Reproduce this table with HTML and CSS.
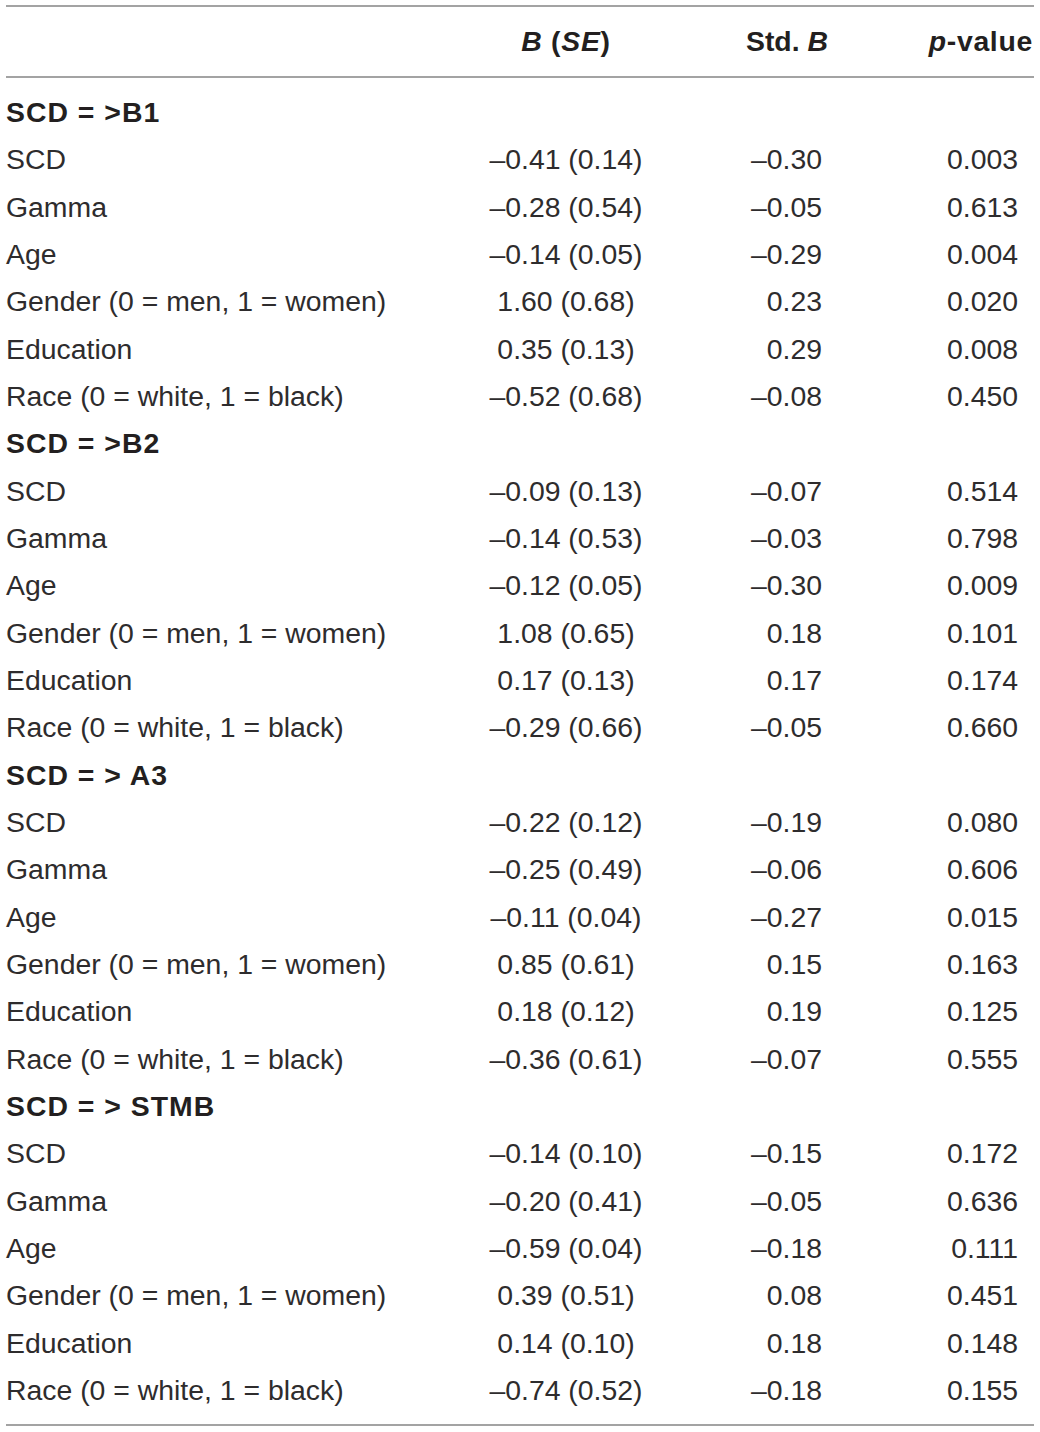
FILE: index.html
```html
<!DOCTYPE html>
<html lang="en">
<head>
    <meta charset="UTF-8">
    <title>Regression results</title>
    <link rel="stylesheet" href="styles.css">
</head>
<body>
    <div class="results-table">
        <div class="row head-row">
            <div class="cell label"></div>
            <div class="cell coef"><em>B</em> (<em>SE</em>)</div>
            <div class="cell std">Std. <em>B</em></div>
            <div class="cell pval"><em>p</em>-value</div>
        </div>

        <div class="table-body">
            <div class="row group-row"><div class="cell label">SCD = &gt;B1</div></div>
            <div class="row"><div class="cell label">SCD</div><div class="cell coef">–0.41 (0.14)</div><div class="cell std">–0.30</div><div class="cell pval">0.003</div></div>
            <div class="row"><div class="cell label">Gamma</div><div class="cell coef">–0.28 (0.54)</div><div class="cell std">–0.05</div><div class="cell pval">0.613</div></div>
            <div class="row"><div class="cell label">Age</div><div class="cell coef">–0.14 (0.05)</div><div class="cell std">–0.29</div><div class="cell pval">0.004</div></div>
            <div class="row"><div class="cell label">Gender (0 = men, 1 = women)</div><div class="cell coef">1.60 (0.68)</div><div class="cell std">0.23</div><div class="cell pval">0.020</div></div>
            <div class="row"><div class="cell label">Education</div><div class="cell coef">0.35 (0.13)</div><div class="cell std">0.29</div><div class="cell pval">0.008</div></div>
            <div class="row"><div class="cell label">Race (0 = white, 1 = black)</div><div class="cell coef">–0.52 (0.68)</div><div class="cell std">–0.08</div><div class="cell pval">0.450</div></div>

            <div class="row group-row"><div class="cell label">SCD = &gt;B2</div></div>
            <div class="row"><div class="cell label">SCD</div><div class="cell coef">–0.09 (0.13)</div><div class="cell std">–0.07</div><div class="cell pval">0.514</div></div>
            <div class="row"><div class="cell label">Gamma</div><div class="cell coef">–0.14 (0.53)</div><div class="cell std">–0.03</div><div class="cell pval">0.798</div></div>
            <div class="row"><div class="cell label">Age</div><div class="cell coef">–0.12 (0.05)</div><div class="cell std">–0.30</div><div class="cell pval">0.009</div></div>
            <div class="row"><div class="cell label">Gender (0 = men, 1 = women)</div><div class="cell coef">1.08 (0.65)</div><div class="cell std">0.18</div><div class="cell pval">0.101</div></div>
            <div class="row"><div class="cell label">Education</div><div class="cell coef">0.17 (0.13)</div><div class="cell std">0.17</div><div class="cell pval">0.174</div></div>
            <div class="row"><div class="cell label">Race (0 = white, 1 = black)</div><div class="cell coef">–0.29 (0.66)</div><div class="cell std">–0.05</div><div class="cell pval">0.660</div></div>

            <div class="row group-row"><div class="cell label">SCD = &gt; A3</div></div>
            <div class="row"><div class="cell label">SCD</div><div class="cell coef">–0.22 (0.12)</div><div class="cell std">–0.19</div><div class="cell pval">0.080</div></div>
            <div class="row"><div class="cell label">Gamma</div><div class="cell coef">–0.25 (0.49)</div><div class="cell std">–0.06</div><div class="cell pval">0.606</div></div>
            <div class="row"><div class="cell label">Age</div><div class="cell coef">–0.11 (0.04)</div><div class="cell std">–0.27</div><div class="cell pval">0.015</div></div>
            <div class="row"><div class="cell label">Gender (0 = men, 1 = women)</div><div class="cell coef">0.85 (0.61)</div><div class="cell std">0.15</div><div class="cell pval">0.163</div></div>
            <div class="row"><div class="cell label">Education</div><div class="cell coef">0.18 (0.12)</div><div class="cell std">0.19</div><div class="cell pval">0.125</div></div>
            <div class="row"><div class="cell label">Race (0 = white, 1 = black)</div><div class="cell coef">–0.36 (0.61)</div><div class="cell std">–0.07</div><div class="cell pval">0.555</div></div>

            <div class="row group-row"><div class="cell label">SCD = &gt; STMB</div></div>
            <div class="row"><div class="cell label">SCD</div><div class="cell coef">–0.14 (0.10)</div><div class="cell std">–0.15</div><div class="cell pval">0.172</div></div>
            <div class="row"><div class="cell label">Gamma</div><div class="cell coef">–0.20 (0.41)</div><div class="cell std">–0.05</div><div class="cell pval">0.636</div></div>
            <div class="row"><div class="cell label">Age</div><div class="cell coef">–0.59 (0.04)</div><div class="cell std">–0.18</div><div class="cell pval">0.111</div></div>
            <div class="row"><div class="cell label">Gender (0 = men, 1 = women)</div><div class="cell coef">0.39 (0.51)</div><div class="cell std">0.08</div><div class="cell pval">0.451</div></div>
            <div class="row"><div class="cell label">Education</div><div class="cell coef">0.14 (0.10)</div><div class="cell std">0.18</div><div class="cell pval">0.148</div></div>
            <div class="row"><div class="cell label">Race (0 = white, 1 = black)</div><div class="cell coef">–0.74 (0.52)</div><div class="cell std">–0.18</div><div class="cell pval">0.155</div></div>
        </div>
    </div>
</body>
</html>
```

FILE: styles.css
```css
body {
    margin: 0;
    background-color: #ffffff;
    font-family: "Liberation Sans", Arial, sans-serif;
    color: #2e2c2d;
}

.results-table {
    margin: 5px 6px 0 6px;
    width: 1028px;
    border-top: 2px solid #a3a3a3;
    border-bottom: 2px solid #a3a3a3;
}

.row {
    display: grid;
    grid-template-columns: 454px 212px 156px 206px;
    height: 47.33px;
    align-items: center;
    font-size: 28.4px;
}

.head-row {
    height: 69px;
    font-weight: bold;
    color: #231f20;
    border-bottom: 2px solid #a3a3a3;
}

.head-row em {
    font-style: italic;
}

.head-row .coef,
.head-row .pval {
    letter-spacing: 0.7px;
}

.table-body {
    padding: 11px 0 10px 0;
}

.cell {
    white-space: nowrap;
}

.label {
    text-align: left;
}

.coef {
    text-align: center;
}

.std {
    text-align: right;
    padding-right: 6px;
}

.pval {
    text-align: right;
    padding-right: 16px;
}

.head-row .std {
    padding-right: 0;
}

.head-row .pval {
    padding-right: 1px;
}

.group-row {
    font-weight: bold;
    color: #231f20;
    letter-spacing: 1px;
}
```
